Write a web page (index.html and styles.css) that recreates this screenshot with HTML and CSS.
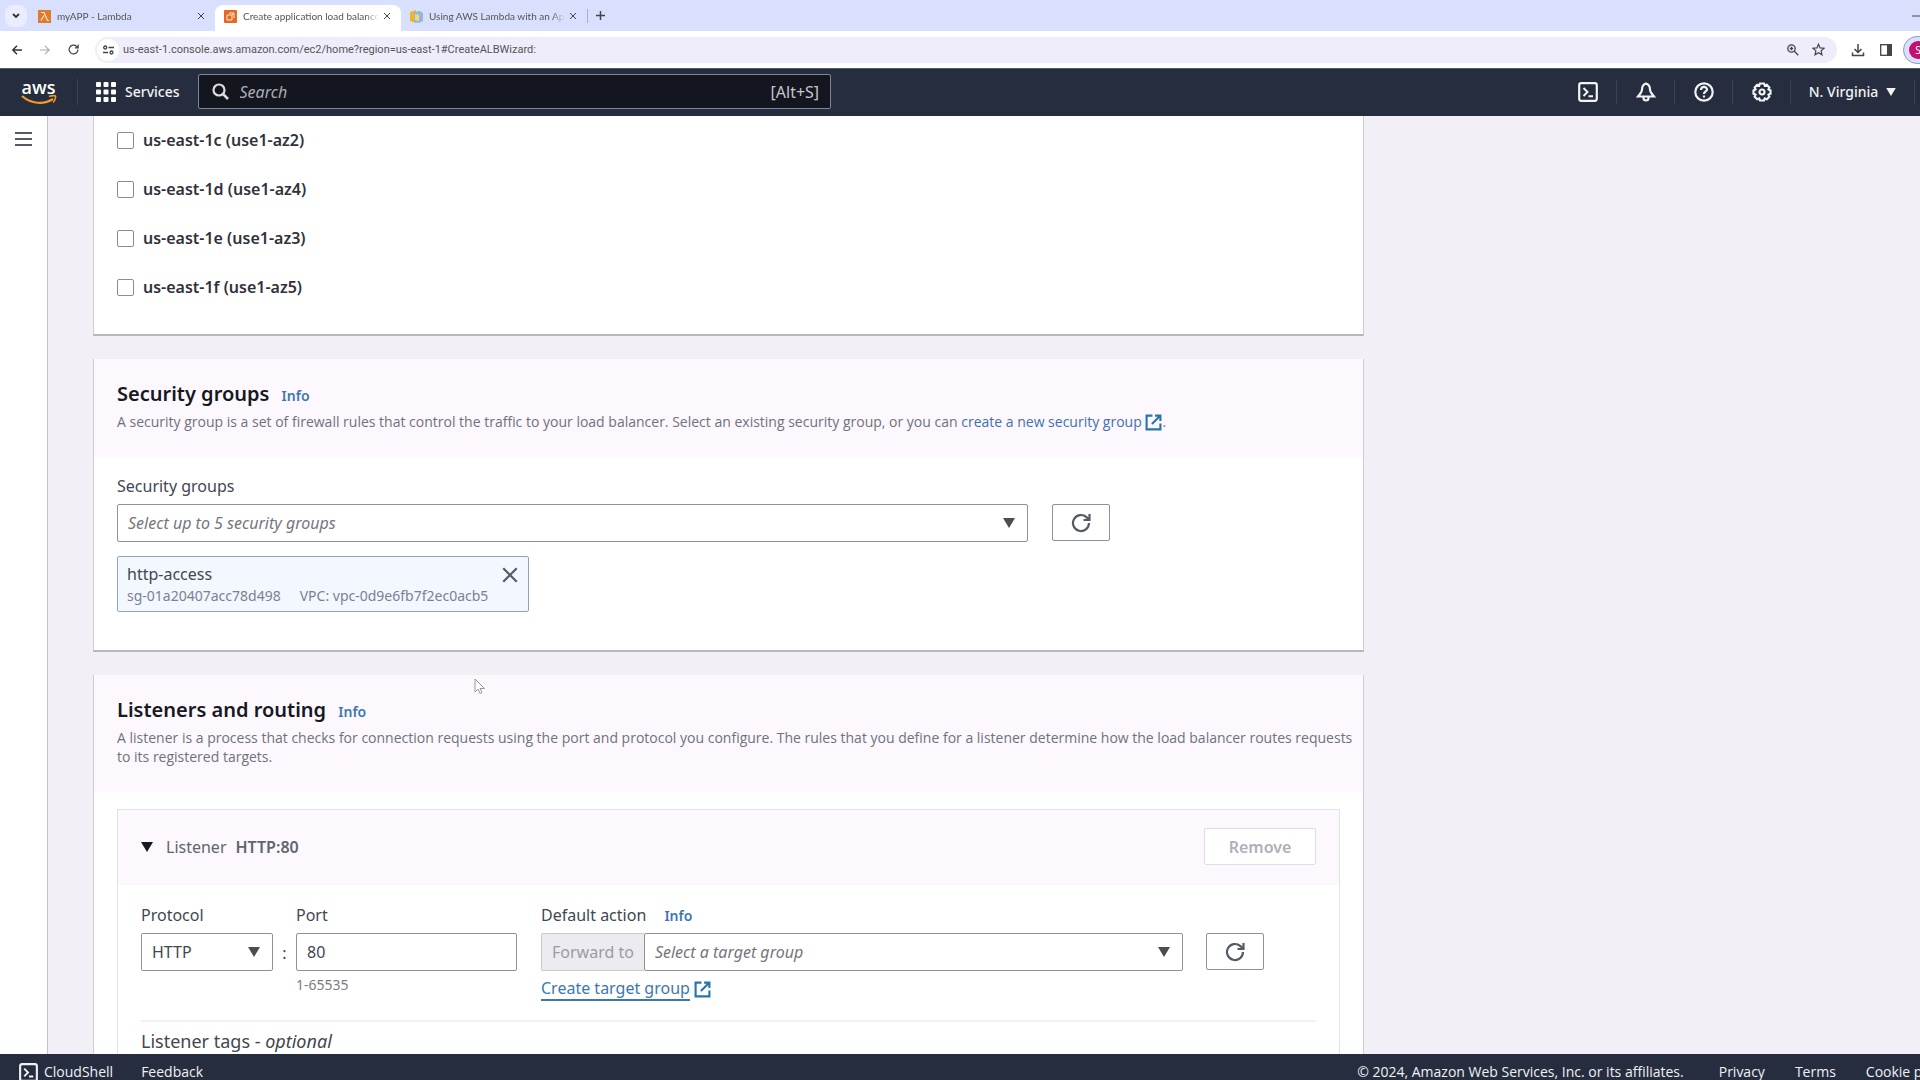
FILE: index.html
```html
<!DOCTYPE html>
<html lang="en">
<head>
    <meta charset="utf-8">
    <title>Create application load balancer</title>
    <link rel="stylesheet" href="styles.css">
</head>
<body>
    <!-- Shared icons -->
    <svg class="sprite" aria-hidden="true">
        <symbol id="i-external" viewBox="0 0 16 16"><path d="M7 1.500H1.500v13h13V9M9.500 1.500h5v5M14.300 1.700L6.500 9.500" fill="none" stroke="currentColor" stroke-width="2"/></symbol>
        <symbol id="i-refresh" viewBox="0 0 20 20"><path d="M18 10a8 8 0 1 1-2.600-5.900L18 6.500M18.500 1v6h-6" fill="none" stroke="currentColor" stroke-width="2.200"/></symbol>
        <symbol id="i-terminal" viewBox="0 0 20 20"><rect x="1.200" y="1.200" width="17.600" height="17.600" rx="2" fill="none" stroke="currentColor" stroke-width="2.200"/><path d="M5.500 6l4 4-4 4M10.500 14.200h4.500" fill="none" stroke="currentColor" stroke-width="2"/></symbol>
        <symbol id="i-close" viewBox="0 0 16 16"><path d="M2 2l12 12M14 2L2 14" fill="none" stroke="currentColor" stroke-width="2"/></symbol>
        <symbol id="i-down" viewBox="0 0 12 10"><path d="M0 0h12L6 10z" fill="currentColor"/></symbol>
    </svg>

    <!-- Browser tabs -->
    <div class="tabs">
        <button class="tab-search" aria-label="Search tabs"><svg width="8" height="6" viewBox="0 0 8 6"><path d="M1 1l3 3 3-3" fill="none" stroke="#333" stroke-width="1.800"/></svg></button>
        <div class="tab">
            <svg class="favicon" viewBox="0 0 13 13"><rect width="13" height="13" fill="#e07a2c"/><path d="M3 2.500h3l3.500 8H11M6 5.500l-3 5" fill="none" stroke="#ffe6d0" stroke-width="1.200"/></svg>
            <span class="tab-title">myAPP - Lambda</span>
            <button class="tab-close" aria-label="Close tab"><svg width="8" height="8"><use href="#i-close"/></svg></button>
        </div>
        <div class="tab active">
            <svg class="favicon" viewBox="0 0 13 13"><rect width="13" height="13" rx="1" fill="#df6b22"/><path d="M3 5h5v5H3zM5 3h5v5M8 5l2-2" fill="none" stroke="#ffe6d0"/></svg>
            <span class="tab-title">Create application load balancer</span>
            <button class="tab-close" aria-label="Close tab"><svg width="8" height="8"><use href="#i-close"/></svg></button>
        </div>
        <div class="tab">
            <svg class="favicon" viewBox="0 0 13 13"><path d="M0 2l6-2v13l-6-2z" fill="#f3b32b"/><path d="M4 2l6-1 3 2v8l-4 2-5-1z" fill="#8fb9d6"/><path d="M5 4l4 1v6l-4-1z" fill="#f7d774"/></svg>
            <span class="tab-title">Using AWS Lambda with an App</span>
            <button class="tab-close" aria-label="Close tab"><svg width="8" height="8"><use href="#i-close"/></svg></button>
        </div>
        <button class="tab-new" aria-label="New tab"><svg width="9" height="9" viewBox="0 0 9 9"><path d="M4.500 0v9M0 4.500h9" stroke="#444" stroke-width="1.500"/></svg></button>
        <button class="minimize" aria-label="Minimize"><svg width="12" height="2"><path d="M0 1h12" stroke="#444"/></svg></button>
    </div>

    <!-- Address bar -->
    <div class="toolbar">
        <button aria-label="Back"><svg width="10" height="10" viewBox="0 0 10 10"><path d="M5 .8L.8 5 5 9.200M1 5h9" fill="none" stroke="#333" stroke-width="1.400"/></svg></button>
        <button aria-label="Forward"><svg width="10" height="10" viewBox="0 0 10 10"><path d="M5 .8L9.200 5 5 9.200M9 5H0" fill="none" stroke="#aaa" stroke-width="1.200"/></svg></button>
        <button aria-label="Reload"><svg width="11" height="11"><use href="#i-refresh"/></svg></button>
        <div class="address">
            <span class="site-info"><svg width="11" height="10" viewBox="0 0 11 10"><path d="M5.500 2.500H11M0 7.500h5" stroke="#444" stroke-width="1.300"/><circle cx="2.200" cy="2.500" r="1.500" fill="none" stroke="#444" stroke-width="1.300"/><circle cx="8.500" cy="7.500" r="1.500" fill="none" stroke="#444" stroke-width="1.300"/></svg></span>
            <input class="url" type="text" aria-label="Address" value="us-east-1.console.aws.amazon.com/ec2/home?region=us-east-1#CreateALBWizard:">
            <svg width="12" height="12" viewBox="0 0 12 12"><circle cx="4.500" cy="4.500" r="3.700" fill="none" stroke="#444" stroke-width="1.300"/><path d="M7.300 7.300l4 4M2.800 4.500h3.400M4.500 2.800v3.400" stroke="#444" stroke-width="1.300"/></svg>
            <svg width="13" height="13" viewBox="0 0 13 13"><path d="M6.500 1.200l1.600 3.700 4 .3-3 2.700.9 3.900-3.500-2.100L3 11.800l.9-3.900-3-2.700 4-.3z" fill="none" stroke="#444" stroke-width="1.200"/></svg>
        </div>
        <button class="download" aria-label="Downloads"><svg width="14" height="14" viewBox="0 0 14 14"><path d="M7 1v8M3.500 6L7 9.500 10.500 6M1.500 9.500v3h11v-3" fill="none" stroke="#444" stroke-width="1.500"/></svg></button>
        <button class="panel" aria-label="Side panel"><svg width="12" height="12" viewBox="0 0 12 12"><rect x=".7" y=".7" width="10.600" height="10.600" fill="none" stroke="#444" stroke-width="1.300"/><path d="M7 0h5v12H7z" fill="#444"/></svg></button>
        <button class="profile" aria-label="Profile"><span>S</span></button>
    </div>

    <!-- AWS navigation -->
    <header class="nav">
        <a class="logo" href="#"><span>aws</span><svg width="36" height="10" viewBox="0 0 36 10"><path d="M1 1c9 8 22 9 31 3" fill="none" stroke="#f29a2e" stroke-width="2.200"/><path d="M28 1.500c3-1 5-1 6.500-.5.300 2-.5 4.500-2.500 6.500" fill="none" stroke="#f29a2e" stroke-width="1.600"/></svg></a>
        <button class="services">
            <svg width="20" height="20" viewBox="0 0 20 20" fill="#fff"><rect width="5" height="5" rx="1"/><rect x="7.500" width="5" height="5" rx="1"/><rect x="15" width="5" height="5" rx="1"/><rect y="7.500" width="5" height="5" rx="1"/><rect x="7.500" y="7.500" width="5" height="5" rx="1"/><rect x="15" y="7.500" width="5" height="5" rx="1"/><rect y="15" width="5" height="5" rx="1"/><rect x="7.500" y="15" width="5" height="5" rx="1"/><rect x="15" y="15" width="5" height="5" rx="1"/></svg>
            Services
        </button>
        <div class="search">
            <svg width="17" height="17" viewBox="0 0 17 17"><circle cx="7" cy="7" r="5.500" fill="none" stroke="#ddd" stroke-width="2.200"/><path d="M11 11l5 5" stroke="#ddd" stroke-width="2.500"/></svg>
            <input type="text" placeholder="Search" aria-label="Search">
            <span>[Alt+S]</span>
        </div>
        <div class="nav-tools">
            <button aria-label="CloudShell"><svg width="20" height="20"><use href="#i-terminal"/></svg></button>
            <button aria-label="Notifications"><svg width="20" height="20" viewBox="0 0 20 20" fill="none" stroke="currentColor" stroke-width="2.200"><path d="M10 1.500c-3 1-4 3-4 6C6 10 4 12 2 14.500h16C16 12 14 10 14 7.500c0-3-1-5-4-6z"/><path d="M7.500 15v1a2.500 2.500 0 0 0 5 0v-1"/></svg></button>
            <button aria-label="Help"><svg width="20" height="20" viewBox="0 0 20 20" fill="none" stroke="currentColor" stroke-width="2.200"><circle cx="10" cy="10" r="8.700"/><path d="M7 8c0-4 6-4 6-.5C13 9.500 10 9.500 10 12M10 13.500v2"/></svg></button>
            <button aria-label="Settings"><svg width="20" height="20" viewBox="0 0 20 20" fill="none" stroke="currentColor" stroke-width="2.200"><path d="M8 1.500h4l.8 2 2-.7 2.500 2.600-.8 2.100 2 .9v3.300l-2 .9.8 2.100-2.500 2.500-2-.7-.8 2H8l-.8-2-2 .7-2.500-2.500.8-2.100-2-.9V8.400l2-.9-.8-2.100 2.500-2.600 2 .7z"/><circle cx="10" cy="10" r="2.500"/></svg></button>
            <button class="region">N. Virginia <svg width="10" height="8"><use href="#i-down"/></svg></button>
        </div>
    </header>

    <div class="page">
        <aside class="sidebar">
            <button aria-label="Open navigation"><svg width="17" height="14" viewBox="0 0 17 14"><path d="M0 1h17M0 7h17M0 13h17" stroke="#545b64" stroke-width="2"/></svg></button>
        </aside>

        <main class="content">
            <!-- Availability zones -->
            <section class="card zones">
                <label><input type="checkbox"> us-east-1c (use1-az2)</label>
                <label><input type="checkbox"> us-east-1d (use1-az4)</label>
                <label><input type="checkbox"> us-east-1e (use1-az3)</label>
                <label><input type="checkbox"> us-east-1f (use1-az5)</label>
            </section>

            <!-- Security groups -->
            <section class="card">
                <div class="card-header">
                    <h2>Security groups <a class="info" href="#">Info</a></h2>
                    <p>A security group is a set of firewall rules that control the traffic to your load balancer. Select an existing security group, or you can <a href="#">create a new security group <svg class="external"><use href="#i-external"/></svg></a>.</p>
                </div>
                <div class="card-body">
                    <label class="field-label" for="groups">Security groups</label>
                    <div class="row">
                        <div class="select groups-select">
                            <select id="groups" class="placeholder"><option>Select up to 5 security groups</option></select>
                            <svg class="caret"><use href="#i-down"/></svg>
                        </div>
                        <button class="refresh" aria-label="Refresh security groups"><svg width="20" height="20"><use href="#i-refresh"/></svg></button>
                    </div>
                    <div class="token">
                        <div>
                            <div class="token-name">http-access</div>
                            <div class="token-meta"><span>sg-01a20407acc78d498</span><span>VPC: vpc-0d9e6fb7f2ec0acb5</span></div>
                        </div>
                        <button aria-label="Remove http-access"><svg width="18" height="18"><use href="#i-close"/></svg></button>
                    </div>
                </div>
            </section>

            <!-- Listeners -->
            <section class="card">
                <div class="card-header">
                    <h2>Listeners and routing <a class="info" href="#">Info</a></h2>
                    <p>A listener is a process that checks for connection requests using the port and protocol you configure. The rules that you define for a listener determine how the load balancer routes requests to its registered targets.</p>
                </div>
                <div class="listener">
                    <div class="listener-header">
                        <button class="toggle"><svg class="caret-static"><use href="#i-down"/></svg>Listener <b>HTTP:80</b></button>
                        <button class="remove" disabled>Remove</button>
                    </div>
                    <div class="listener-body">
                        <div class="fields">
                            <div class="protocol">
                                <label class="field-label" for="protocol">Protocol</label>
                                <div class="select">
                                    <select id="protocol"><option>HTTP</option></select>
                                    <svg class="caret"><use href="#i-down"/></svg>
                                </div>
                            </div>
                            <span class="colon">:</span>
                            <div class="port">
                                <label class="field-label" for="port">Port</label>
                                <input id="port" type="text" value="80">
                                <div class="hint">1-65535</div>
                            </div>
                            <div class="action">
                                <div class="field-label"><label for="target">Default action</label> <a class="info" href="#">Info</a></div>
                                <div class="forward">
                                    <span class="prefix">Forward to</span>
                                    <div class="select">
                                        <select id="target" class="placeholder"><option>Select a target group</option></select>
                                        <svg class="caret"><use href="#i-down"/></svg>
                                    </div>
                                </div>
                                <a class="create" href="#"><span>Create target group</span> <svg class="external"><use href="#i-external"/></svg></a>
                            </div>
                            <button class="refresh" aria-label="Refresh target groups"><svg width="20" height="20"><use href="#i-refresh"/></svg></button>
                        </div>
                        <h3>Listener tags - <i>optional</i></h3>
                    </div>
                </div>
            </section>
        </main>

        <svg class="cursor" width="12" height="17" viewBox="0 0 12 17"><path d="M1 1v13l3-3 2 4.500 2-1-2-4h4.500z" fill="#fff" stroke="#999"/></svg>
    </div>

    <footer class="footer">
        <button class="cloudshell"><svg width="19" height="19"><use href="#i-terminal"/></svg>CloudShell</button>
        <a href="#">Feedback</a>
        <div class="legal">
            <span class="copyright">© 2024, Amazon Web Services, Inc. or its affiliates.</span>
            <a href="#">Privacy</a>
            <a href="#">Terms</a>
            <a href="#">Cookie preferences</a>
        </div>
    </footer>
</body>
</html>
```

FILE: styles.css
```css
* {
    box-sizing: border-box;
}

body {
    margin: 0;
    height: 100vh;
    display: flex;
    flex-direction: column;
    overflow: hidden;
    font-family: "Noto Sans", sans-serif;
    font-size: 16px;
    line-height: 24px;
    color: #414750;
    background: #f2f0f6;
}

button, input, select {
    font: inherit;
    color: inherit;
    margin: 0;
}

button {
    padding: 0;
    border: 0;
    background: none;
}

a {
    color: #4070ae;
    text-decoration: none;
}

svg {
    display: block;
    flex: none;
}

.sprite {
    position: absolute;
    width: 0;
    height: 0;
}

/* Browser tabs */
.tabs {
    flex: none;
    display: flex;
    align-items: center;
    height: 31px;
    padding-left: 5px;
    background: #d8e0fd;
    font-family: Lato, sans-serif;
    font-size: 10px;
    color: #555;
}

.tabs button {
    display: flex;
    align-items: center;
    justify-content: center;
}

.tabs .tab-search {
    width: 22px;
    height: 22px;
    margin-right: 2px;
    border-radius: 8px;
    background: #e9edfe;
}

.tab {
    align-self: flex-end;
    display: flex;
    align-items: center;
    width: 186px;
    height: 26px;
    padding: 0 10px 4px 9px;
    border-radius: 8px 8px 0 0;
}

.tab.active {
    background: #fff;
}

.favicon {
    width: 13px;
    height: 13px;
    margin-right: 6px;
}

.tab-title {
    width: 136px;
    overflow: hidden;
    white-space: nowrap;
    line-height: 16px;
    -webkit-mask-image: linear-gradient(90deg, #000 90%, transparent);
    mask-image: linear-gradient(90deg, #000 90%, transparent);
}

.tab-close {
    margin-left: auto;
    color: #444;
}

.tabs .tab-new {
    width: 26px;
    height: 14px;
    border-left: 1px solid #a8b0cc;
}

.tabs .minimize {
    margin-left: auto;
    margin-right: -4px;
}

/* Address bar */
.toolbar {
    flex: none;
    display: flex;
    align-items: center;
    height: 37px;
    padding-left: 3px;
    background: #fff;
    color: #444;
}

.toolbar button {
    display: flex;
    align-items: center;
    justify-content: center;
    width: 28px;
    height: 28px;
}

.address {
    flex: 1;
    display: flex;
    align-items: center;
    gap: 13px;
    height: 26px;
    margin-left: 8px;
    padding: 0 12px 0 2px;
    border-radius: 13px;
    background: #efecfb;
}

.site-info {
    display: flex;
    align-items: center;
    justify-content: center;
    width: 22px;
    height: 22px;
    margin-right: -9px;
    border-radius: 50%;
    background: #fff;
}

.url {
    flex: 1;
    padding: 0;
    border: 0;
    outline: 0;
    background: none;
    font-family: Roboto, sans-serif;
    font-size: 11px;
    color: #555;
}

.toolbar .download {
    margin-left: 7px;
}

.toolbar .profile {
    flex: none;
    width: 30px;
    height: 28px;
    margin-left: 3px;
    margin-right: -13px;
    border: 1px solid #8f9cc4;
    border-radius: 14px;
    background: #d8e0fd;
}

.profile span {
    width: 18px;
    height: 18px;
    border-radius: 50%;
    background: #c2106f;
    color: #fff;
    font-size: 10px;
    line-height: 18px;
}

/* AWS navigation */
.nav {
    flex: none;
    display: flex;
    align-items: center;
    height: 48px;
    padding-bottom: 2px;
    border-top: 1px solid #555b6b;
    background: #262d3e;
    color: #f2f3f5;
    font-size: 14px;
    font-weight: 500;
}

.logo {
    display: flex;
    flex-direction: column;
    align-items: center;
    width: 78px;
    height: 26px;
    border-right: 1px solid #3a4253;
    color: #fff;
    font-family: "Open Sans", sans-serif;
    font-size: 18px;
    font-weight: 600;
    line-height: 16px;
}

.services {
    display: flex;
    align-items: center;
    gap: 9px;
    padding: 0 18px 0 18px;
}

.search {
    display: flex;
    align-items: center;
    gap: 11px;
    width: 33%;
    height: 35px;
    padding: 0 11px 0 13px;
    border: 1px solid #7d8694;
    border-radius: 2px;
    background: #14161f;
    font-size: 16px;
    font-weight: 400;
    color: #c3c6cc;
}

.search input {
    flex: 1;
    padding: 0;
    border: 0;
    outline: 0;
    background: none;
}

.search input::placeholder {
    color: #a9adb5;
    font-style: italic;
    opacity: 1;
}

.nav-tools {
    display: flex;
    margin-left: auto;
    margin-right: 5px;
}

.nav-tools button {
    display: flex;
    align-items: center;
    justify-content: center;
    width: 58px;
    height: 24px;
    border-right: 1px solid #3a4253;
}

.nav-tools .region {
    gap: 8px;
    width: 124px;
}

/* Page */
.page {
    position: relative;
    flex: 1;
    display: flex;
    min-height: 0;
    overflow: hidden;
}

.sidebar {
    width: 48px;
    border-right: 1px solid #c4c2c8;
    background: #fff;
}

.sidebar button {
    margin: 16px 15px;
}

.content {
    flex: 1;
    padding: 0 45px;
}

.card {
    max-width: 1271px;
    margin-bottom: 23px;
    border: 1px solid #cfccd4;
    border-top: 0;
    border-bottom: 2px solid #b9b6bd;
    background: #fff;
}

.zones {
    display: flex;
    flex-direction: column;
    align-items: flex-start;
    gap: 25px;
    padding: 12px 23px 35px;
}

.zones label {
    display: flex;
    align-items: center;
    gap: 9px;
    font-weight: 600;
    color: #30323a;
}

.zones input {
    appearance: none;
    width: 17px;
    height: 17px;
    border: 1px solid #8b8d95;
    border-radius: 2px;
    background: #fff;
}

.card-header {
    padding: 21px 8px 26px 23px;
    background: #fcf8fe;
}

.card-header h2 {
    margin: 0 0 4px;
    font-size: 20px;
    line-height: 28px;
    font-weight: 600;
    color: #16191f;
}

.card-header p {
    margin: 0;
    font-family: "Open Sans", sans-serif;
    font-size: 14px;
    line-height: 19px;
    color: #70727b;
}

.info {
    margin-left: 7px;
    font-size: 14px;
    line-height: 16px;
    font-weight: 600;
    color: #3d77b0;
}

.external {
    display: inline-block;
    width: 17px;
    height: 17px;
    vertical-align: -4px;
    color: #2676a8;
}

.card-body {
    padding: 17px 23px 38px;
}

.field-label {
    display: block;
    margin-bottom: 6px;
}

.row {
    display: flex;
    gap: 24px;
}

.select {
    position: relative;
}

.groups-select {
    flex: 0 1 911px;
}

.select select,
.port input {
    appearance: none;
    display: block;
    width: 100%;
    height: 38px;
    padding: 0 10px;
    border: 1px solid #8f9198;
    border-radius: 2px;
    background: #fff;
    outline: 0;
}

.select .placeholder {
    font-style: italic;
    color: #74767e;
}

.caret {
    position: absolute;
    right: 13px;
    top: 14px;
    width: 12px;
    height: 10px;
    color: #4b4d53;
    pointer-events: none;
}

.refresh {
    display: flex;
    align-items: center;
    justify-content: center;
    width: 58px;
    height: 37px;
    border: 1px solid #8f9198;
    border-radius: 2px;
    background: #fff;
    color: #545b64;
}

.token {
    display: flex;
    align-items: flex-start;
    justify-content: space-between;
    width: 412px;
    margin-top: 14px;
    padding: 5px 9px 5px;
    border: 1px solid #98a2b5;
    border-radius: 2px;
    background: #f3f7ff;
}

.token-meta {
    display: flex;
    gap: 19px;
    font-size: 14px;
    line-height: 20px;
    color: #7b8190;
}

.token button {
    padding-top: 4px;
    color: #545b64;
}

/* Listener */
.listener {
    margin: 17px 23px 24px;
    border: 1px solid #e4e0e8;
    background: #fff;
}

.listener-header {
    display: flex;
    align-items: center;
    justify-content: space-between;
    padding: 18px 23px 20px;
    background: #fcf8fe;
}

.toggle {
    display: flex;
    align-items: center;
    color: #63656d;
}

.caret-static {
    width: 12px;
    height: 10px;
    margin-right: 13px;
    color: #16191f;
}

.toggle b {
    margin-left: 9px;
    font-weight: 600;
}

.remove {
    width: 112px;
    height: 37px;
    border: 1px solid #e2dce6;
    border-radius: 2px;
    background: #fff;
    color: #b0afb8;
    font-weight: 600;
}

.listener-body {
    padding: 18px 23px 24px;
}

.fields {
    display: flex;
    align-items: flex-start;
    padding-bottom: 20px;
    border-bottom: 2px solid #f1f0f3;
}

.protocol {
    width: 132px;
}

.colon {
    width: 23px;
    padding-top: 38px;
    text-align: center;
}

.port {
    width: 221px;
    margin-right: 24px;
}

.hint {
    margin-top: 4px;
    font-size: 14px;
    line-height: 20px;
    color: #7b7d85;
}

.action {
    flex: 0 1 642px;
    margin-right: 23px;
}

.action .info {
    margin-left: 14px;
}

.forward {
    display: flex;
}

.prefix {
    padding: 6px 10px;
    border: 1px solid #c9c7cf;
    border-right: 0;
    border-radius: 2px 0 0 2px;
    background: #ecebf0;
    color: #9b9ba3;
    white-space: nowrap;
}

.forward .select {
    flex: 1;
}

.create {
    display: block;
    margin-top: 5px;
    color: #3d77b0;
}

.create span {
    border-bottom: 2px solid #3d77b0;
}

.fields .refresh {
    margin-top: 30px;
}

.listener-body h3 {
    margin: 6px 0 0;
    font-size: 18px;
    line-height: 26px;
    font-weight: 400;
}

.cursor {
    position: absolute;
    left: 474px;
    top: 562px;
}

/* Footer */
.footer {
    flex: none;
    display: flex;
    align-items: flex-start;
    height: 26px;
    padding: 6px 0 0 19px;
    overflow: hidden;
    background: #262d3e;
    color: #f0f1f5;
    font-family: "Open Sans", sans-serif;
    font-size: 14px;
    font-weight: 500;
    white-space: nowrap;
}

.footer a {
    color: inherit;
}

.cloudshell {
    display: flex;
    align-items: center;
    gap: 6px;
    margin-right: 28px;
}

.legal {
    display: flex;
    gap: 30px;
    margin-left: auto;
    margin-right: -72px;
}

.copyright {
    margin-right: 5px;
}
```
